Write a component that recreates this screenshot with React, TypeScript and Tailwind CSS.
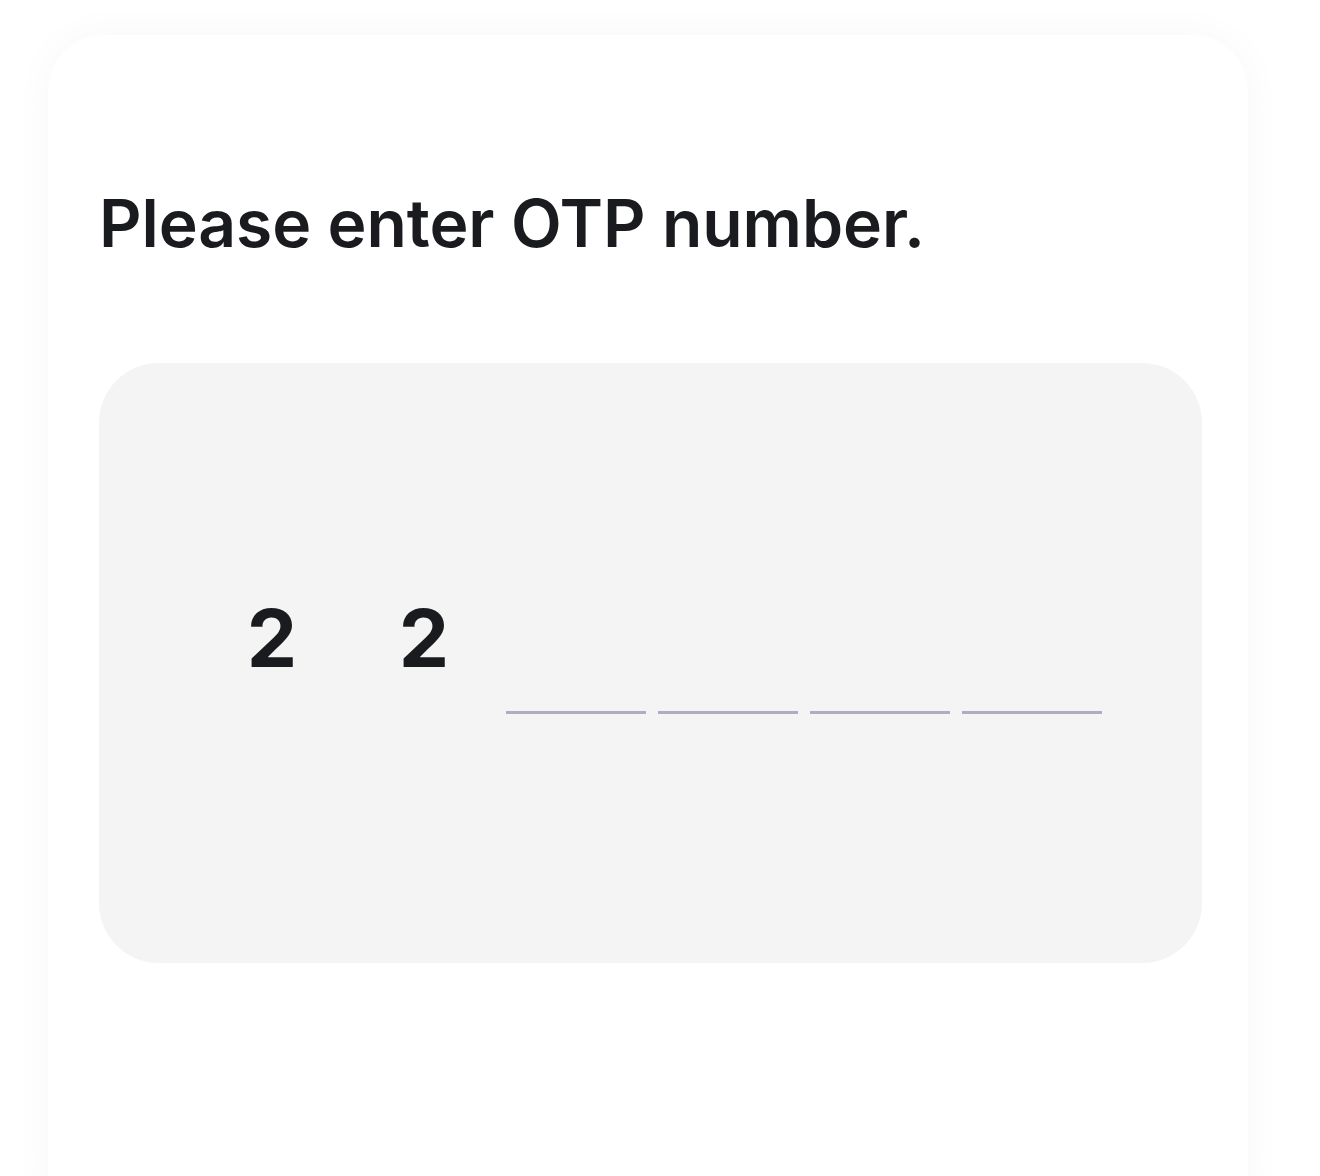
const code = ["2", "2", "", "", "", ""];

export default function App() {
  return (
    <div className="min-h-screen bg-white pl-[48px] pr-[72px] pt-[35px] font-['Inter',sans-serif] overflow-hidden">
      <div className="h-[1200px] w-[1200px] rounded-[56px] bg-white px-[51px] pt-[153px] shadow-[0_0_40px_rgba(0,0,0,0.035)]">
        <h1 className="text-[66px] font-semibold leading-[70px] tracking-[-0.1px] text-[#1a1b1f]">
          Please enter OTP number.
        </h1>
        <div className="mt-[105px] flex h-[600px] w-[1103px] items-center rounded-[60px] bg-[#f4f4f4] pl-[103px] pt-[2px]">
          <div className="flex gap-[12px]">
            {code.map((d, i) => (
              <div
                key={i}
                className={
                  "flex h-[100px] w-[140px] items-start justify-center " +
                  (d ? "" : "border-b-[3px] border-[#adafc0]")
                }
              >
                <span className="text-[80px] font-bold leading-[48px] text-[#1a1b1f]">
                  {d}
                </span>
              </div>
            ))}
          </div>
        </div>
      </div>
    </div>
  );
}
